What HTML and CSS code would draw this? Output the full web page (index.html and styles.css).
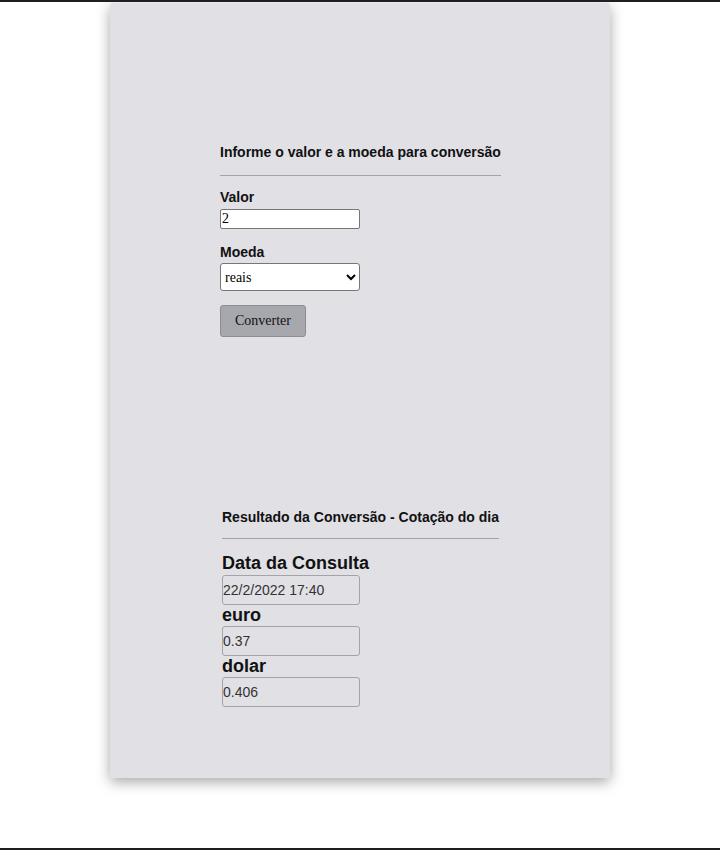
FILE: index.html
```html
<!DOCTYPE html>
<html lang="pt-BR">
<head>
<meta charset="utf-8">
<title>Conversor de moedas</title>
<link rel="stylesheet" href="styles.css">
</head>
<body>
  <main class="card">
    <form class="conv">
      <h2 class="title">Informe o valor e a moeda para conversão</h2>
      <div class="rule"></div>
      <label class="lbl lbl-first" for="valor">Valor</label>
      <input class="field" id="valor" type="text" value="2">
      <label class="lbl lbl-second" for="moeda">Moeda</label>
      <select class="select" id="moeda">
        <option>reais</option>
      </select>
      <button class="btn" type="button">Converter</button>
    </form>
    <section class="result">
      <h2 class="title">Resultado da Conversão - Cotação do dia</h2>
      <div class="rule rule-result"></div>
      <div class="res-label res-first">Data da Consulta</div>
      <input class="res-field" type="text" value="22/2/2022 17:40" readonly>
      <div class="res-label">euro</div>
      <input class="res-field" type="text" value="0.37" readonly>
      <div class="res-label">dolar</div>
      <input class="res-field" type="text" value="0.406" readonly>
    </section>
  </main>
</body>
</html>
```

FILE: styles.css
```css
* {
  box-sizing: border-box;
}

html, body {
  margin: 0;
  padding: 0;
}

body {
  background: #ffffff;
  border-top: 2px solid #1f1f21;
  border-bottom: 2px solid #1f1f21;
  height: 850px;
  font-family: "Liberation Sans", Arial, sans-serif;
  color: #111;
  overflow: hidden;
}

.card {
  width: 500px;
  height: 775px;
  margin: 1px auto 0;
  background: #e0e0e5;
  border-radius: 3px;
  box-shadow: 0 4px 14px rgba(0, 0, 0, 0.35);
  padding-top: 141px;
}

.conv {
  width: fit-content;
  margin: 0 0 0 110px;
  display: flex;
  flex-direction: column;
  align-items: flex-start;
}

.title {
  margin: 0;
  font-size: 14px;
  line-height: 16px;
  font-weight: bold;
  color: #111;
  white-space: nowrap;
}

.rule {
  align-self: stretch;
  height: 0;
  border-top: 1px solid #a3a3a8;
  margin-top: 15px;
}

.lbl {
  display: block;
  font-size: 14px;
  line-height: 16px;
  font-weight: bold;
  color: #111;
}

.lbl-first {
  margin-top: 13px;
}

.lbl-second {
  margin-top: 15px;
}

.field {
  margin-top: 4px;
  width: 140px;
  height: 20px;
  padding: 0 1px;
  border: 1px solid #767676;
  border-radius: 2px;
  background: #fff;
  font-family: "Liberation Serif", "Times New Roman", serif;
  font-size: 14px;
  color: #000;
}

.select {
  margin-top: 3px;
  width: 140px;
  height: 28px;
  padding: 0;
  border: 1px solid #767676;
  border-radius: 3px;
  background: #fff;
  font-family: "Liberation Serif", "Times New Roman", serif;
  font-size: 14px;
  color: #000;
}

.btn {
  margin-top: 14px;
  width: 86px;
  height: 32px;
  padding: 0;
  border: 1px solid #8c8c92;
  border-radius: 3px;
  background: #a7a7ae;
  font-family: "Liberation Serif", "Times New Roman", serif;
  font-size: 14px;
  color: #111;
}

.result {
  width: fit-content;
  margin: 172px 0 0 112px;
  display: flex;
  flex-direction: column;
  align-items: flex-start;
}

.rule-result {
  margin-top: 13px;
}

.res-label {
  font-size: 18px;
  line-height: 21px;
  font-weight: bold;
  color: #111;
}

.res-first {
  margin-top: 14px;
  margin-bottom: 1px;
}

.res-field {
  width: 138px;
  height: 30px;
  padding: 0;
  border: 1px solid #a3a3a8;
  border-radius: 3px;
  background: transparent;
  font-family: "Liberation Sans", Arial, sans-serif;
  font-size: 14px;
  color: #333;
}
```
